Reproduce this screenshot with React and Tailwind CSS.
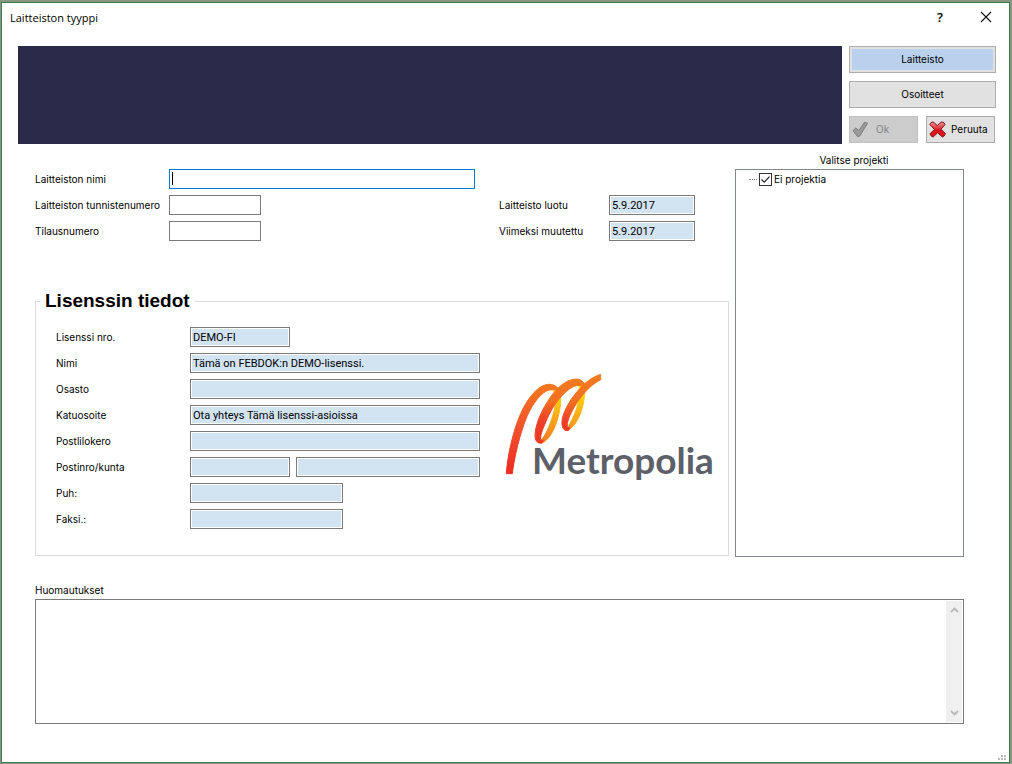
import React from "react";

const fieldBase =
  "h-5 min-w-0 border border-[#7a7a7a] p-px indent-px font-['Roboto','Liberation_Sans',sans-serif] text-[11px] leading-4 text-black outline-none";

function ReadOnlyField({ id, value = "", width, label }) {
  return (
    <input
      id={id}
      aria-label={label}
      readOnly
      defaultValue={value}
      className={`${fieldBase} ${width} bg-[#d2e3f2] bg-clip-content`}
    />
  );
}

function Row({ id, label, labelWidth, children }) {
  return (
    <div className="flex h-5 items-center">
      <label htmlFor={id} className={`${labelWidth} shrink-0 whitespace-nowrap`}>
        {label}
      </label>
      {children}
    </div>
  );
}

function TitleBar() {
  return (
    <header className="flex h-[43px] items-start justify-between pr-[17px] pl-2">
      <h1 className="pt-1.5 font-['Open_Sans','Noto_Sans',sans-serif] text-[11px] leading-[18px]">
        Laitteiston tyyppi
      </h1>
      <div className="flex items-center gap-9 pt-2">
        <button
          aria-label="Ohje"
          className="w-2 font-['Open_Sans','Noto_Sans',sans-serif] text-[13px] leading-3 font-semibold"
        >
          ?
        </button>
        <button aria-label="Sulje">
          <svg width="12" height="12" viewBox="0 0 12 12" className="block">
            <path d="M1 1 L11 11 M11 1 L1 11" stroke="#111" strokeWidth="1.1" fill="none" />
          </svg>
        </button>
      </div>
    </header>
  );
}

function OkIcon() {
  return (
    <svg width="18" height="18" viewBox="0 0 18 18" className="shrink-0">
      <path
        d="M1 9.6 L3.8 7 L6.8 9.6 L12.6 1.2 L15.6 2.2 L7.6 15.2 L5.6 15.6 Z"
        fill="#9a9a9a"
        stroke="#7c7c7c"
        strokeWidth="1"
        strokeLinejoin="round"
      />
    </svg>
  );
}

function CancelIcon() {
  return (
    <svg width="18" height="18" viewBox="0 0 18 18" className="shrink-0">
      <defs>
        <linearGradient id="cancelFill" x1="0" y1="0" x2="0" y2="1">
          <stop offset="0" stopColor="#f09a9a" />
          <stop offset="0.4" stopColor="#e23a40" />
          <stop offset="0.55" stopColor="#dd1018" />
          <stop offset="1" stopColor="#e01820" />
        </linearGradient>
      </defs>
      <path
        d="M0.8 3.4 Q1.6 1.4 4 0.8 L8.4 4.6 Q10.4 2 13 0.8 Q15.6 1.4 16 3.6 L12 8.2 L16.4 12.6 Q15.8 15.2 13.4 16 L8.6 11.8 L4.2 16 Q1.6 15.4 1 12.8 L5.4 8.4 Z"
        fill="url(#cancelFill)"
        stroke="#7c1418"
        strokeWidth="1"
        strokeLinejoin="round"
      />
    </svg>
  );
}

function ActionPanel() {
  return (
    <div className="flex w-[147px] shrink-0 flex-col gap-2">
      <button className="h-[27px] border border-[#adadad] bg-[#b9d1ec] text-center ring-2 ring-[#e1e1e1] ring-inset">
        Laitteisto
      </button>
      <button className="h-[27px] border border-[#adadad] bg-[#e1e1e1] text-center">Osoitteet</button>
      <div className="flex gap-2">
        <button
          disabled
          className="flex h-[27px] w-[69px] items-center gap-1.5 border border-[#bfbfbf] bg-[#cccccc] pl-0.5 text-[#838383]"
        >
          <OkIcon />
          Ok
        </button>
        <button className="flex h-[27px] w-[69px] items-center gap-1 border border-[#adadad] bg-[#e1e1e1] pl-0.5">
          <CancelIcon />
          Peruuta
        </button>
      </div>
    </div>
  );
}

function MetropoliaLogo() {
  return (
    <svg
      width="222"
      height="120"
      viewBox="0 0 222 120"
      role="img"
      aria-label="Metropolia"
      className="mt-[38px] shrink-0 self-start"
    >
      <defs>
        <linearGradient id="stem" x1="0" y1="327" x2="0" y2="50" gradientUnits="userSpaceOnUse">
          <stop offset="0" stopColor="#ee2a24" />
          <stop offset="0.55" stopColor="#f0562a" />
          <stop offset="1" stopColor="#f47b20" />
        </linearGradient>
        <linearGradient id="loop" x1="0" y1="235" x2="0" y2="40" gradientUnits="userSpaceOnUse">
          <stop offset="0" stopColor="#ee3524" />
          <stop offset="0.35" stopColor="#ee4027" />
          <stop offset="0.65" stopColor="#f26f21" />
          <stop offset="1" stopColor="#f37b20" />
        </linearGradient>
        <linearGradient id="gold" x1="0" y1="230" x2="0" y2="60" gradientUnits="userSpaceOnUse">
          <stop offset="0" stopColor="#f47a20" />
          <stop offset="0.45" stopColor="#fbab1c" />
          <stop offset="1" stopColor="#ffe600" />
        </linearGradient>
      </defs>
      <g transform="scale(0.3333)" strokeWidth="3" strokeLinejoin="round">
        <path
          d="M158 76 C172 88 168 124 158 152 C150 180 136 214 122 226 L122 235 C148 228 166 190 176 150 C184 118 184 92 176 76 Z"
          fill="url(#gold)"
          stroke="url(#gold)"
        />
        <path
          d="M232 58 C244 72 240 98 230 128 C224 148 212 176 201 189 L201 197 C224 188 240 156 248 124 C255 96 256 74 250 56 Z"
          fill="url(#gold)"
          stroke="url(#gold)"
        />
        <path
          d="M19 326 C22 276 38 200 62 146 C84 96 118 56 150 58 C164 59 174 66 178 78 C170 74 160 73 148 75 C126 80 100 112 82 152 C60 204 43 276 37 326 Z"
          fill="url(#stem)"
          stroke="url(#stem)"
        />
        <path
          d="M126 234 C108 237 103 222 106 200 C110 166 134 116 164 80 C190 50 220 37 240 44 C250 48 256 58 256 68 C246 60 232 60 220 65 C190 80 160 120 142 160 C130 188 120 210 122 224 C123 228 126 228 130 225 Z"
          fill="url(#loop)"
          stroke="url(#loop)"
        />
        <path
          d="M206 196 C190 201 183 184 187 162 C192 134 214 98 240 70 C258 50 280 35 302 28 L302 45 C280 54 256 78 236 106 C218 132 206 156 202 176 C201 188 204 190 209 186 Z"
          fill="url(#loop)"
          stroke="url(#loop)"
        />
      </g>
      <text
        x="32"
        y="109"
        fontFamily="Lato, 'Open Sans', sans-serif"
        fontSize="37"
        fontWeight="700"
        fill="#5d6068"
      >
        Metropolia
      </text>
    </svg>
  );
}

function DeviceForm() {
  return (
    <div className="flex justify-between pr-[34px]">
      <div className="flex flex-col gap-1.5">
        <Row id="nimi" label="Laitteiston nimi" labelWidth="w-[134px]">
          <div className="relative flex">
            <input id="nimi" className={`${fieldBase} peer w-[306px] border-[#0078d7] bg-white`} />
            <span className="pointer-events-none absolute top-[3px] left-[3px] h-[13px] w-px bg-black peer-focus:hidden" />
          </div>
        </Row>
        <Row id="tunniste" label="Laitteiston tunnistenumero" labelWidth="w-[134px]">
          <input id="tunniste" className={`${fieldBase} w-[92px] bg-white`} />
        </Row>
        <Row id="tilaus" label="Tilausnumero" labelWidth="w-[134px]">
          <input id="tilaus" className={`${fieldBase} w-[92px] bg-white`} />
        </Row>
      </div>
      <div className="flex flex-col justify-end gap-1.5">
        <Row id="luotu" label="Laitteisto luotu" labelWidth="w-[110px]">
          <ReadOnlyField id="luotu" value="5.9.2017" width="w-[86px]" />
        </Row>
        <Row id="muutettu" label="Viimeksi muutettu" labelWidth="w-[110px]">
          <ReadOnlyField id="muutettu" value="5.9.2017" width="w-[86px]" />
        </Row>
      </div>
    </div>
  );
}

const licenseRows = [
  { id: "lisenssi", label: "Lisenssi nro.", value: "DEMO-FI", width: "w-[100px]" },
  { id: "lnimi", label: "Nimi", value: "Tämä on FEBDOK:n DEMO-lisenssi.", width: "w-[290px]" },
  { id: "osasto", label: "Osasto", width: "w-[290px]" },
  { id: "katu", label: "Katuosoite", value: "Ota yhteys Tämä lisenssi-asioissa", width: "w-[290px]" },
  { id: "lokero", label: "Postlilokero", width: "w-[290px]" },
  { id: "postinro", label: "Postinro/kunta", width: "w-[100px]", second: "Kunta" },
  { id: "puh", label: "Puh:", width: "w-[153px]" },
  { id: "faksi", label: "Faksi.:", width: "w-[153px]" },
];

function LicenseInfo() {
  return (
    <fieldset className="min-w-0 border border-[#dcdcdc] pb-[26px] pl-5">
      <legend className="-ml-[15px] px-1 font-['Liberation_Sans',sans-serif] text-[19px] leading-7 font-bold">
        Lisenssin tiedot
      </legend>
      <div className="flex items-center gap-5 pt-3">
        <div className="flex flex-col gap-1.5">
          {licenseRows.map((row) => (
            <Row key={row.id} id={row.id} label={row.label} labelWidth="w-[134px]">
              <div className="flex gap-1.5">
                <ReadOnlyField id={row.id} value={row.value} width={row.width} />
                {row.second && <ReadOnlyField id="kunta" label={row.second} width="w-[184px]" />}
              </div>
            </Row>
          ))}
        </div>
        <MetropoliaLogo />
      </div>
    </fieldset>
  );
}

function ProjectList() {
  return (
    <section className="flex w-[229px] shrink-0 flex-col pt-2">
      <h2 className="h-[17px] pl-[9px] text-center leading-4">Valitse projekti</h2>
      <div className="flex-1 border border-[#828790] pt-px pl-[13px]">
        <label className="flex h-4 items-center gap-0.5">
          <span className="w-2 border-t border-dotted border-[#808080]" />
          <span className="grid size-[13px] place-items-center">
            <input
              type="checkbox"
              defaultChecked
              className="peer col-start-1 row-start-1 size-[13px] appearance-none border border-[#333] bg-white"
            />
            <svg
              viewBox="0 0 11 11"
              className="pointer-events-none invisible col-start-1 row-start-1 size-[11px] peer-checked:visible"
            >
              <path d="M1.5 5.5 L4.2 8.2 L9.5 2.6" fill="none" stroke="#222" strokeWidth="1.2" />
            </svg>
          </span>
          Ei projektia
        </label>
      </div>
    </section>
  );
}

function Notes() {
  return (
    <section className="pt-[25px]">
      <label htmlFor="huom" className="block h-[17px] leading-4">
        Huomautukset
      </label>
      <div className="flex h-[125px] border border-[#7a7a7a] p-px">
        <textarea id="huom" className="flex-1 resize-none p-0.5 outline-none" />
        <div className="flex w-4 flex-col items-center justify-between bg-[#f0f0f0] py-1.5">
          <svg width="9" height="6" viewBox="0 0 9 6">
            <path d="M1 5 L4.5 1.5 L8 5" fill="none" stroke="#b8b8b8" strokeWidth="1.8" />
          </svg>
          <svg width="9" height="6" viewBox="0 0 9 6">
            <path d="M1 1 L4.5 4.5 L8 1" fill="none" stroke="#b8b8b8" strokeWidth="1.8" />
          </svg>
        </div>
      </div>
    </section>
  );
}

export default function App() {
  return (
    <div className="flex min-h-screen flex-col bg-[#8a9684] pt-0.5 pr-0.5 pb-px pl-px font-['Inter','Liberation_Sans',sans-serif] text-[10px] text-black">
      <div className="flex flex-1 flex-col border border-[#3f7a4a] bg-white">
        <TitleBar />
        <div className="flex gap-[7px] pr-[13px] pl-4">
          <div className="min-h-[98px] flex-1 bg-[#2c2a4b]" />
          <ActionPanel />
        </div>
        <main className="pr-[45px] pl-[33px]">
          <div className="flex min-h-[413px] gap-1.5">
            <div className="flex flex-1 flex-col justify-between pt-[25px] pb-px">
              <DeviceForm />
              <LicenseInfo />
            </div>
            <ProjectList />
          </div>
          <Notes />
        </main>
        <div className="mt-auto flex justify-end pr-0.5 pb-0.5">
          <svg width="9" height="5" viewBox="0 0 9 5">
            <path d="M0 3h2v2h-2zM3 3h2v2h-2zM6 3h2v2h-2zM6 0h2v2h-2zM3 0h2v2h-2z" fill="#bdbdbd" />
          </svg>
        </div>
      </div>
    </div>
  );
}
